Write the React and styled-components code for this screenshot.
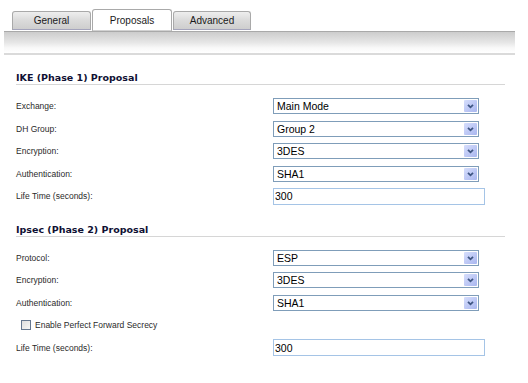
import React from 'react';
import styled, { createGlobalStyle } from 'styled-components';

const Global = createGlobalStyle`
  html, body { margin: 0; padding: 0; background: #fff; }
  body { width: 528px; height: 383px; overflow: hidden; font-family: "Liberation Sans", Arial, sans-serif; }
`;

const Page = styled.div`
  width: 528px;
  height: 383px;
  box-sizing: border-box;
  padding-top: 9px;
  background: #fff;
`;

const TabStrip = styled.div`
  display: flex;
  align-items: flex-end;
  gap: 1px;
  height: 22px;
  padding-left: 12px;
`;

const Tab = styled.div`
  box-sizing: border-box;
  width: ${(p) => p.$w}px;
  height: ${(p) => (p.$active ? 22 : 19)}px;
  margin-bottom: ${(p) => (p.$active ? 0 : 1)}px;
  border: 1px solid #a9a9a9;
  border-bottom-color: ${(p) => (p.$active ? '#d2d2d2' : '#a4a4bc')};
  border-radius: 3px 3px 0 0;
  background: ${(p) =>
    p.$active ? '#fff' : 'linear-gradient(#eeeeee, #dcdcdc 45%, #cecece)'};
  display: flex;
  align-items: center;
  justify-content: center;
  padding-top: ${(p) => (p.$active ? 1 : 0)}px;
  font-size: 10px;
  color: #1a1a1a;
`;

const Toolbar = styled.div`
  box-sizing: border-box;
  width: 511px;
  height: 24px;
  margin-left: 4px;
  border-top: 1px solid #a9a9a9;
  border-bottom: 2px solid #dadada;
  background: linear-gradient(#cccccc, #e6e6e6 50%, #f8f8f8 75%, #fff);
`;

const Content = styled.div`
  width: 489px;
  padding: 17px 0 0 16px;
`;

const SectionTitle = styled.div`
  margin-top: ${(p) => p.$top || 0}px;
  margin-bottom: 10px;
  border-bottom: 1px solid #d6d6d6;
  font-family: "DejaVu Sans", Verdana, sans-serif;
  font-weight: bold;
  font-size: 9.5px;
  line-height: 12px;
  color: #0f1033;
`;

const FieldRow = styled.div`
  display: grid;
  grid-template-columns: 257px 1fr;
  align-items: center;
  height: 22.5px;
`;

const Label = styled.span`
  font-size: 8.5px;
  color: #2a2a2a;
`;

const SelectBox = styled.div`
  box-sizing: border-box;
  width: 206px;
  height: 16px;
  border: 1px solid #7f9db9;
  background: #fff;
  display: flex;
  align-items: center;
  justify-content: space-between;
  padding-left: 3px;
  font-size: 10.5px;
  color: #000;
`;

const ArrowButton = styled.svg`
  display: block;
  width: 13px;
  height: 12px;
  margin-right: 1px;
`;

const TextBox = styled.div`
  box-sizing: border-box;
  width: 212px;
  height: 17px;
  border: 1px solid #a5c4e6;
  background: #fff;
  display: flex;
  align-items: center;
  padding-left: 1px;
  font-size: 10.5px;
  color: #000;
`;

const CheckRow = styled.div`
  display: flex;
  align-items: center;
  gap: 4px;
  height: 22.5px;
  padding-left: 5px;
`;

const CheckBox = styled.span`
  box-sizing: border-box;
  width: 10px;
  height: 10px;
  border: 1px solid #65778f;
  background: linear-gradient(135deg, #dedede, #f7f7f5);
`;

function Arrow() {
  return (
    <ArrowButton viewBox="0 0 13 12">
      <defs>
        <linearGradient id="ab" x1="0" y1="0" x2="1" y2="1">
          <stop offset="0" stopColor="#d6defc" />
          <stop offset="1" stopColor="#a9b6ef" />
        </linearGradient>
      </defs>
      <rect x="0" y="0" width="13" height="12" rx="1" fill="url(#ab)" />
      <path d="M4 4.8 L6.5 7.3 L9 4.8" fill="none" stroke="#3f5683" strokeWidth="1.8" />
    </ArrowButton>
  );
}

function Select({ value }) {
  return (
    <SelectBox>
      <span>{value}</span>
      <Arrow />
    </SelectBox>
  );
}

function Field({ label, children }) {
  return (
    <FieldRow>
      <Label>{label}</Label>
      {children}
    </FieldRow>
  );
}

export default function App() {
  return (
    <Page>
      <Global />
      <TabStrip>
        <Tab $w={79}>General</Tab>
        <Tab $w={80} $active>Proposals</Tab>
        <Tab $w={78}>Advanced</Tab>
      </TabStrip>
      <Toolbar />
      <Content>
        <SectionTitle>IKE (Phase 1) Proposal</SectionTitle>
        <Field label="Exchange:"><Select value="Main Mode" /></Field>
        <Field label="DH Group:"><Select value="Group 2" /></Field>
        <Field label="Encryption:"><Select value="3DES" /></Field>
        <Field label="Authentication:"><Select value="SHA1" /></Field>
        <Field label="Life Time (seconds):"><TextBox>300</TextBox></Field>

        <SectionTitle $top={16}>Ipsec (Phase 2) Proposal</SectionTitle>
        <Field label="Protocol:"><Select value="ESP" /></Field>
        <Field label="Encryption:"><Select value="3DES" /></Field>
        <Field label="Authentication:"><Select value="SHA1" /></Field>
        <CheckRow>
          <CheckBox />
          <Label>Enable Perfect Forward Secrecy</Label>
        </CheckRow>
        <Field label="Life Time (seconds):"><TextBox>300</TextBox></Field>
      </Content>
    </Page>
  );
}
